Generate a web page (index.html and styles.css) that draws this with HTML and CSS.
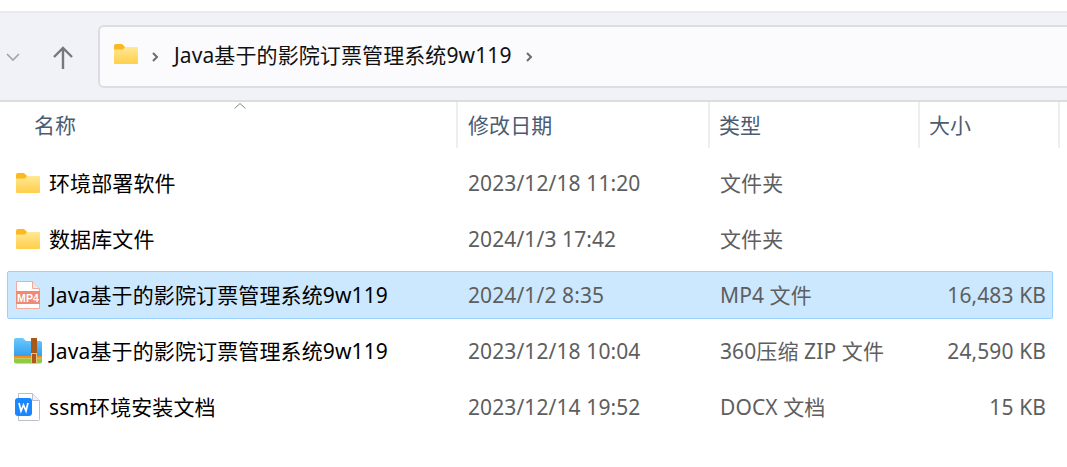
FILE: index.html
```html
<!DOCTYPE html>
<html lang="zh-CN">
<head>
<meta charset="utf-8">
<title>Java基于的影院订票管理系统9w119</title>
<link rel="stylesheet" href="styles.css">
</head>
<body>
<svg class="defs" width="0" height="0" aria-hidden="true">
  <defs>
    <linearGradient id="folderBody" x1="0" y1="0" x2="0" y2="1">
      <stop offset="0" stop-color="#ffe894"/>
      <stop offset="1" stop-color="#ffcf4a"/>
    </linearGradient>
    <linearGradient id="zipBlue" x1="0" y1="0" x2="0" y2="1">
      <stop offset="0" stop-color="#6ccafb"/>
      <stop offset="1" stop-color="#2f9def"/>
    </linearGradient>
    <symbol id="folder" viewBox="0 0 26 22">
      <path d="M1 3a2 2 0 0 1 2-2h6l3 3v4H1z" fill="#fbb81f"/>
      <path d="M1 6.500h9l2-2.500h12a1 1 0 0 1 1 1V20a1 1 0 0 1-1 1H2a1 1 0 0 1-1-1z" fill="url(#folderBody)"/>
    </symbol>
  </defs>
</svg>
<div class="toolbar">
  <svg class="chevron-down" width="16" height="10" viewBox="0 0 16 10"><path d="M2 2l6 6 6-6" fill="none" stroke="#a3a5a9" stroke-width="1.700"/></svg>
  <svg class="up-arrow" width="22" height="24" viewBox="0 0 22 24"><path d="M11 23V2M2 11l9-9 9 9" fill="none" stroke="#76787b" stroke-width="2.400"/></svg>
  <div class="address">
    <svg class="address-folder" width="26" height="22"><use href="#folder"/></svg>
    <svg class="crumb" width="8" height="12" viewBox="0 0 8 12"><path d="M2 2l4 4-4 4" fill="none" stroke="#6c6c6c" stroke-width="2"/></svg>
    <span class="crumb-text">Java基于的影院订票管理系统9w119</span>
    <svg class="crumb" width="8" height="12" viewBox="0 0 8 12"><path d="M2 2l4 4-4 4" fill="none" stroke="#6c6c6c" stroke-width="2"/></svg>
  </div>
</div>
<div class="list">
  <div class="head">
    <div class="hcell hname">名称<svg class="sort" width="14" height="8" viewBox="0 0 14 8"><path d="M1.500 6.500L7 1.500l5.500 5" fill="none" stroke="#8a8a8a" stroke-width="1"/></svg></div>
    <div class="hcell hdate">修改日期</div>
    <div class="hcell">类型</div>
    <div class="hcell">大小</div>
  </div>
  <div class="rows">
    <div class="row">
      <div class="name"><svg class="icon" width="26" height="22"><use href="#folder"/></svg>环境部署软件</div>
      <div class="cell">2023/12/18 11:20</div><div class="cell">文件夹</div><div class="cell size"></div>
    </div>
    <div class="row">
      <div class="name"><svg class="icon" width="26" height="22"><use href="#folder"/></svg>数据库文件</div>
      <div class="cell">2024/1/3 17:42</div><div class="cell">文件夹</div><div class="cell size"></div>
    </div>
    <div class="row selected">
      <div class="name java">
        <svg class="icon" width="26" height="30" viewBox="0 0 26 30">
          <path d="M1.500 1.500h16l7 7v20h-23z" fill="#fff" stroke="#f3a99c"/>
          <path d="M17.500 1.500v7h7" fill="#fde3dd" stroke="#f3a99c"/>
          <rect x="1" y="11" width="24" height="13" fill="#ee8a76"/>
          <text class="mp4" x="13" y="21.500" text-anchor="middle">MP4</text>
        </svg>Java基于的影院订票管理系统9w119
      </div>
      <div class="cell">2024/1/2 8:35</div><div class="cell">MP4 文件</div><div class="cell size">16,483 KB</div>
    </div>
    <div class="row">
      <div class="name java">
        <svg class="icon zip" width="28" height="28" viewBox="0 0 28 28">
          <path d="M0 3a2 2 0 0 1 2-2h7l3 3h14a2 2 0 0 1 2 2v14H0z" fill="url(#zipBlue)"/>
          <path d="M0 19h28v2.500H0z" fill="#ff8f12"/>
          <path d="M0 21.500h28v3a2 2 0 0 1-2 2H2a2 2 0 0 1-2-2z" fill="#8fcb3e"/>
          <rect x="17" y="1" width="6" height="26" fill="#a8591a"/>
          <rect x="17.500" y="16.500" width="5" height="10" fill="none" stroke="#eec27c" stroke-width="1"/>
        </svg>Java基于的影院订票管理系统9w119
      </div>
      <div class="cell">2023/12/18 10:04</div><div class="cell">360压缩 ZIP 文件</div><div class="cell size">24,590 KB</div>
    </div>
    <div class="row">
      <div class="name">
        <svg class="icon" width="26" height="30" viewBox="0 0 26 30">
          <path d="M3.500 1.500h14l7 7v19a1 1 0 0 1-1 1h-20z" fill="#fff" stroke="#b9bfcc"/>
          <path d="M17.500 1.500v7h7" fill="#f0f2f6" stroke="#b9bfcc"/>
          <rect x="0" y="6" width="17" height="18" rx="3" fill="#1a86ff"/>
          <path d="M4 11l2 8 2.500-6 2.500 6 2-8" fill="none" stroke="#fff" stroke-width="1.700"/>
        </svg>ssm环境安装文档
      </div>
      <div class="cell">2023/12/14 19:52</div><div class="cell">DOCX 文档</div><div class="cell size">15 KB</div>
    </div>
  </div>
</div>
</body>
</html>
```
FILE: styles.css
```css
* { box-sizing: border-box; }
html, body { margin: 0; height: 100%; background: #fff; overflow: hidden; }
body {
  width: 1067px;
  height: 467px;
  padding-top: 11px;
  font-family: "Noto Sans", "Noto Sans CJK SC", sans-serif;
  font-size: 21px;
  line-height: 28px;
  letter-spacing: 0.1px;
  color: #000;
}
.defs { display: block; height: 0; }
.toolbar {
  height: 91px;
  background: #f0f2f7;
  border-top: 2px solid #e8e9ec;
  border-bottom: 2px solid #dcdde0;
  display: flex;
  align-items: center;
  padding: 0 0 0 5px;
}
.chevron-down { margin-top: 1px; }
.up-arrow { margin-left: 31px; margin-top: 2px; }
.address {
  margin-left: 24px;
  flex: 1;
  height: 63px;
  background: #fbfbfd;
  border: 2px solid #dcdde1;
  border-right: 0;
  border-radius: 6px 0 0 6px;
  display: flex;
  align-items: center;
  padding: 0 0 4px 13px;
}
.address-folder { margin-bottom: 1px; }
.crumb { margin-left: 12px; margin-top: 5px; }
.crumb-text { margin-left: 15px; color: #111; }
.crumb-text + .crumb { margin-left: 13px; }
.head {
  display: grid;
  grid-template-columns: 458px 252px 210px 140px 7px;
  height: 46px;
}
.hcell {
  font-size: 21px;
  color: #4b5c72;
  border-right: 2px solid #eeeeef;
  padding: 0 0 1px 9px;
  display: flex;
  align-items: center;
  position: relative;
}
.hname { padding-left: 34px; }
.hdate { padding-left: 10px; }
.sort { position: absolute; left: 233px; top: 0; }
.rows { display: flex; flex-direction: column; gap: 8px; padding: 11px 14px 0 7px; }
.row {
  height: 48px;
  display: grid;
  grid-template-columns: 450px 252px 210px 1fr;
  align-items: center;
  border: 1px solid transparent;
  border-radius: 2px;
}
.row.selected { background: #cce8ff; border-color: #99d1ff; }
.name { display: flex; align-items: center; position: relative; padding-left: 41px; color: #000; white-space: nowrap; }
.name.java { padding-left: 42px; letter-spacing: 0.12px; }
.icon { position: absolute; left: 7px; top: 50%; transform: translateY(-50%); }
.icon.zip { left: 6px; }
.cell { color: #5e5e5e; padding-left: 10px; white-space: nowrap; }
.size { text-align: right; padding-right: 6px; padding-left: 0; }
.mp4 { font: bold 10.5px "Liberation Sans", sans-serif; fill: #fff; }
```
